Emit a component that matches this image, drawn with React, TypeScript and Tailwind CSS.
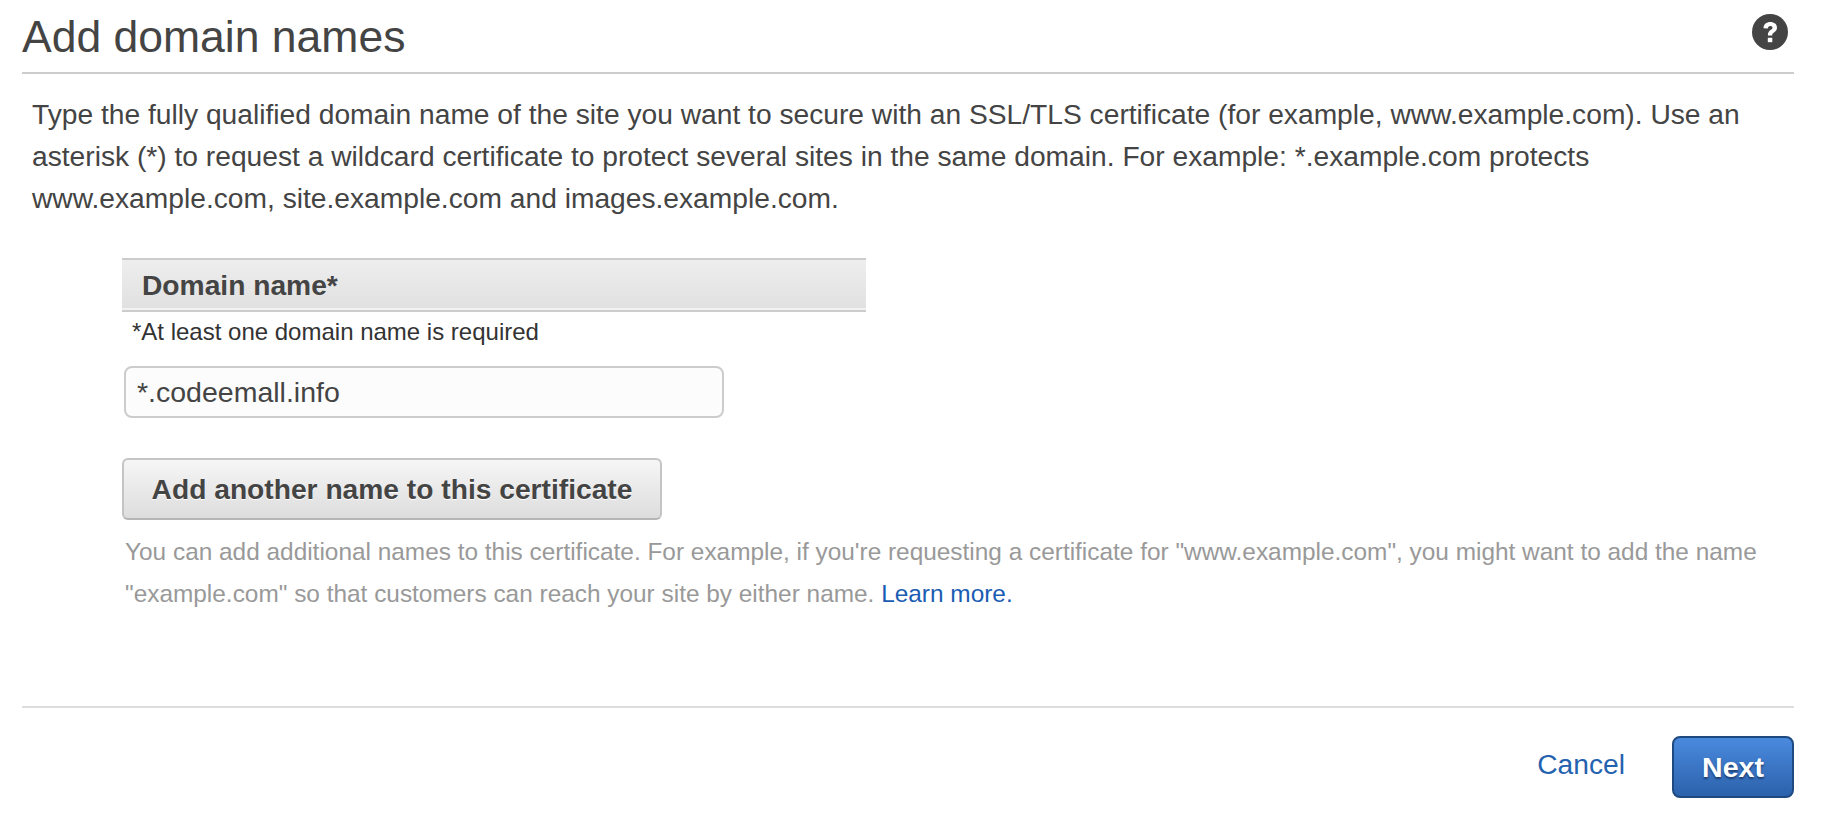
// ACM "Add domain names" wizard step
function HelpIcon() {
  return (
    <svg viewBox="0 0 36 36" className="h-9 w-9" aria-hidden>
      <circle cx="18" cy="18" r="18" fill="#444444" />
      <path
        d="M11.500 14.200c0-4 3-6.200 6.800-6.200 3.900 0 6.700 2.200 6.700 5.600 0 2.500-1.300 3.700-3 4.900-1.300.9-1.800 1.500-1.800 3h-4.300c0-2.800.8-4.100 2.600-5.400 1.300-.9 2-1.500 2-2.400 0-1-.9-1.700-2.200-1.700-1.500 0-2.400.9-2.500 2.600z"
        fill="#ffffff"
      />
      <rect x="15.800" y="23.800" width="4.500" height="4.400" fill="#ffffff" />
    </svg>
  );
}

export default function App() {
  return (
    <div className="h-[822px] w-[1826px] overflow-hidden bg-white pl-[22px] pr-[32px] font-['Liberation_Sans',Arial,sans-serif] text-[#444444]">
      <header className="flex h-[74px] items-start justify-between border-b-2 border-[#cccccc]">
        <h1 className="pt-[13px] text-[44.500px] leading-[48px]">Add domain names</h1>
        <div className="pr-[6px] pt-[14px]">
          <HelpIcon />
        </div>
      </header>

      <p className="mt-[19px] pl-[10px] text-[28.200px] leading-[42px]">
        Type the fully qualified domain name of the site you want to secure with an SSL/TLS certificate (for example, www.example.com). Use an
        <br />
        asterisk (*) to request a wildcard certificate to protect several sites in the same domain. For example: *.example.com protects
        <br />
        www.example.com, site.example.com and images.example.com.
      </p>

      <div className="mt-[38.500px] pl-[100px]">
        <div className="flex h-[54px] w-[744px] items-center border-y-2 border-[#cccccc] bg-gradient-to-b from-[#eeeeee] to-[#e0e0e0] pl-[20px] pt-[1px] text-[28.200px] font-bold shadow-[inset_0_-2px_0_#f2f2f2]">
          Domain name*
        </div>
        <p className="pl-[10px] pt-[5px] text-[24px] leading-[30px] text-[#333333]">*At least one domain name is required</p>

        <div className="ml-[2px] mt-[19px] flex h-[52px] w-[600px] items-center rounded-[8px] border-2 border-[#cccccc] bg-[#fcfcfc] pl-[11px] pt-[1px] text-[28.500px]">
          *.codeemall.info
        </div>

        <button className="mt-[40px] block h-[62px] w-[540px] rounded-[6px] border-2 border-[#c4c4c4] border-b-[#b5b5b5] bg-gradient-to-b from-[#f6f6f6] to-[#dddddd] pt-[2px] text-[28.200px] font-bold [text-shadow:0_1px_0_#ffffff]">
          Add another name to this certificate
        </button>

        <p className="mt-[11px] pl-[3px] text-[24.400px] leading-[42px] text-[#999999]">
          You can add additional names to this certificate. For example, if you're requesting a certificate for "www.example.com", you might want to add the name
          <br />
          "example.com" so that customers can reach your site by either name.{" "}
          <a className="text-[#1b5cb3]">Learn more.</a>
        </p>
      </div>

      <footer className="mt-[91px] border-t-2 border-[#dddddd]">
        <div className="mt-[28px] flex items-center justify-end">
          <a className="mb-[4px] mr-[47px] text-[28.200px] text-[#2462b0]">Cancel</a>
          <button className="h-[62px] w-[122px] rounded-[8px] border-2 border-[#1f4a80] bg-gradient-to-b from-[#4a8ade] to-[#2c62ac] pt-[2px] text-[28.500px] font-bold text-white [text-shadow:0_2px_2px_#1d3f70]">
            Next
          </button>
        </div>
      </footer>
    </div>
  );
}
